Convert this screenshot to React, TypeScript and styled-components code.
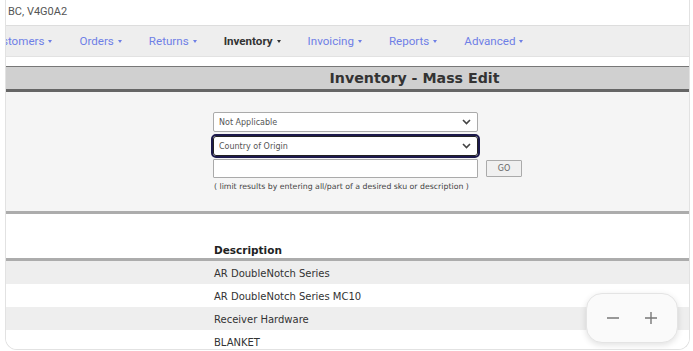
import * as React from "react";
import styled, { createGlobalStyle } from "styled-components";

const GlobalStyle = createGlobalStyle`
  html, body {
    margin: 0;
    padding: 0;
    background: #ffffff;
  }
  * { box-sizing: border-box; }
`;

const navItems = [
  { label: "Customers", active: false },
  { label: "Orders", active: false },
  { label: "Returns", active: false },
  { label: "Inventory", active: true },
  { label: "Invoicing", active: false },
  { label: "Reports", active: false },
  { label: "Advanced", active: false },
];

const rows = [
  "AR DoubleNotch Series",
  "AR DoubleNotch Series MC10",
  "Receiver Hardware",
  "BLANKET",
];

export default function App() {
  return (
    <>
      <GlobalStyle />
      <Frame>
        <AddressBar>BC, V4G0A2</AddressBar>
        <NavBar>
          <NavList>
            {navItems.map((item) => (
              <NavItem key={item.label} $active={item.active}>
                {item.label}
                <Caret />
              </NavItem>
            ))}
          </NavList>
        </NavBar>
        <Spacer />
        <TitleBar>
          <Title>Inventory - Mass Edit</Title>
        </TitleBar>
        <FormPanel>
          <FormColumn>
            <Select defaultValue="na">
              <option value="na">Not Applicable</option>
            </Select>
            <Select defaultValue="coo" $focused>
              <option value="coo">Country of Origin</option>
            </Select>
            <SearchRow>
              <TextInput type="text" />
              <GoButton>GO</GoButton>
            </SearchRow>
            <Hint>( limit results by entering all/part of a desired sku or description )</Hint>
          </FormColumn>
        </FormPanel>
        <HeaderRow>
          <Cell />
          <HeaderCell>Description</HeaderCell>
        </HeaderRow>
        {rows.map((r, i) => (
          <Row key={r} $striped={i % 2 === 0}>
            <Cell />
            <Cell>{r}</Cell>
          </Row>
        ))}
        <ZoomControl>
          <ZoomButton aria-label="zoom out">
            <svg width="14" height="14" viewBox="0 0 14 14">
              <path d="M1 7h12" stroke="#777" strokeWidth="1.4" />
            </svg>
          </ZoomButton>
          <ZoomButton aria-label="zoom in">
            <svg width="14" height="14" viewBox="0 0 14 14">
              <path d="M1 7h12M7 1v12" stroke="#777" strokeWidth="1.4" />
            </svg>
          </ZoomButton>
        </ZoomControl>
      </Frame>
    </>
  );
}

const Frame = styled.div`
  position: relative;
  margin-left: 5px;
  width: 685px;
  height: 350px;
  border: 1px solid #e2e2e2;
  border-top: none;
  border-radius: 0 0 12px 12px;
  overflow: hidden;
  background: #ffffff;
`;

const AddressBar = styled.div`
  height: 26px;
  padding: 0 0 0 2px;
  line-height: 24px;
  font-family: Roboto, "Liberation Sans", sans-serif;
  font-size: 11px;
  color: #555555;
  border-bottom: 1px solid #dddddd;
`;

const NavBar = styled.div`
  height: 31px;
  background: #eeeeee;
  border-bottom: 1px solid #e2e2e2;
  display: flex;
  align-items: center;
  overflow: hidden;
`;

const NavList = styled.div`
  display: flex;
  align-items: center;
  gap: 27px;
  margin-left: -18px;
  white-space: nowrap;
`;

const NavItem = styled.span<{ $active?: boolean }>`
  display: inline-flex;
  align-items: center;
  font-family: Roboto, "Liberation Sans", sans-serif;
  font-size: 11.6px;
  font-weight: ${(p) => (p.$active ? 700 : 400)};
  color: ${(p) => (p.$active ? "#333333" : "#6e7fe6")};
`;

const Caret = styled.span`
  display: inline-block;
  margin-left: 4px;
  width: 0;
  height: 0;
  border-left: 2.5px solid transparent;
  border-right: 2.5px solid transparent;
  border-top: 3px solid currentColor;
`;

const Spacer = styled.div`
  height: 9px;
`;

const TitleBar = styled.div`
  height: 26px;
  background: #d0d0d0;
  border-top: 1px solid #777777;
  border-bottom: 3px solid #666666;
  display: flex;
  align-items: center;
  justify-content: center;
  padding-left: 134px;
`;

const Title = styled.h1`
  margin: 0;
  font-family: "DejaVu Sans", Verdana, sans-serif;
  font-size: 14.2px;
  font-weight: 700;
  color: #333333;
`;

const FormPanel = styled.div`
  height: 122px;
  background: #f5f5f5;
  border-bottom: 3px solid #acacac;
  padding: 20px 0 0 207px;
`;

const FormColumn = styled.div`
  display: flex;
  flex-direction: column;
  align-items: flex-start;
`;

const chevron = encodeURIComponent(
  "<svg xmlns='http://www.w3.org/2000/svg' width='9' height='6' viewBox='0 0 9 6'><path d='M1 1l3.5 3.5L8 1' fill='none' stroke='#444' stroke-width='1.6'/></svg>"
);

const Select = styled.select<{ $focused?: boolean }>`
  appearance: none;
  width: 265px;
  height: 20px;
  margin: 0 0 4px 0;
  padding: 0 18px 0 5px;
  font-family: "DejaVu Sans", Verdana, sans-serif;
  font-size: 8px;
  color: #555555;
  background: #ffffff url("data:image/svg+xml,${chevron}") no-repeat right 6px center;
  border: 1px solid ${(p) => (p.$focused ? "#222" : "#aaaaaa")};
  border-radius: ${(p) => (p.$focused ? "3px" : "2px")};
  outline: ${(p) => (p.$focused ? "2px solid #1d1a4c" : "none")};
  outline-offset: 0;
`;

const SearchRow = styled.div`
  display: flex;
  align-items: center;
  gap: 8px;
  margin-top: -1px;
`;

const TextInput = styled.input`
  flex: none;
  width: 265px;
  height: 19px;
  border: 1px solid #aaaaaa;
  border-radius: 1px;
  background: #ffffff;
  padding: 0 4px;
`;

const GoButton = styled.button`
  flex: none;
  width: 36px;
  height: 17px;
  padding: 0;
  border: 1px solid #aaaaaa;
  border-radius: 1px;
  background: #f0f0f0;
  font-family: "DejaVu Sans", Verdana, sans-serif;
  font-size: 8px;
  color: #666666;
`;

const Hint = styled.div`
  margin-top: 4px;
  padding-left: 1px;
  font-family: "DejaVu Sans", Verdana, sans-serif;
  font-size: 7.8px;
  color: #444444;
  white-space: nowrap;
`;

const Row = styled.div<{ $striped?: boolean }>`
  display: grid;
  grid-template-columns: 202px 1fr;
  height: 23px;
  padding-top: 2px;
  align-items: center;
  background: ${(p) => (p.$striped ? "#eeeeee" : "#ffffff")};
  font-family: "DejaVu Sans", Verdana, sans-serif;
  font-size: 10px;
  color: #333333;
`;

const HeaderRow = styled(Row)`
  height: 47px;
  align-items: end;
  padding-top: 0;
  padding-bottom: 2px;
  background: #ffffff;
  border-bottom: 3px solid #acacac;
`;

const Cell = styled.div`
  padding-left: 6px;
`;

const HeaderCell = styled(Cell)`
  font-weight: 700;
  font-size: 10.5px;
  color: #222222;
`;

const ZoomControl = styled.div`
  position: absolute;
  right: 11px;
  bottom: 6px;
  width: 92px;
  height: 50px;
  display: flex;
  align-items: center;
  justify-content: space-between;
  padding: 0 12px 0 12px;
  background: #fafafa;
  border: 1px solid #e4e4e4;
  border-radius: 16px;
  box-shadow: 0 2px 6px rgba(0, 0, 0, 0.12);
`;

const ZoomButton = styled.button`
  width: 28px;
  height: 28px;
  display: flex;
  align-items: center;
  justify-content: center;
  padding: 0;
  border: none;
  background: transparent;
`;
